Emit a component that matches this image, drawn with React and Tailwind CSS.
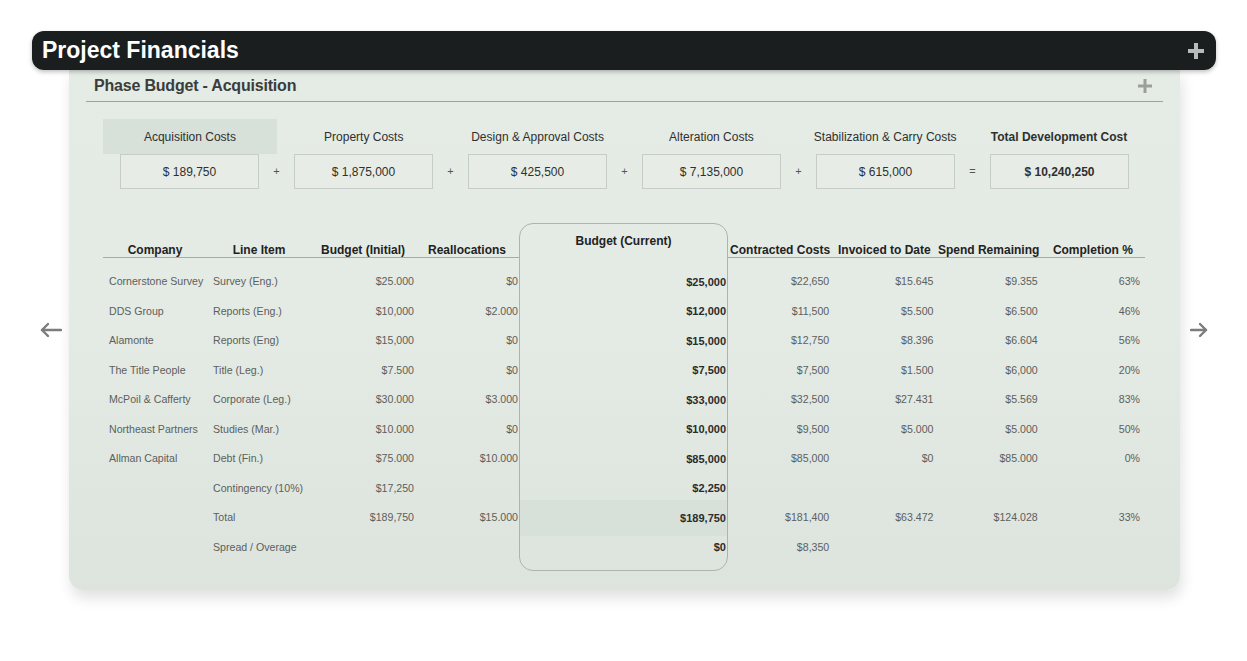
import React from "react";

const font = { fontFamily: '"Liberation Sans", Arial, Helvetica, sans-serif' };

const summary = [
  { label: "Acquisition Costs", value: "$ 189,750", active: true },
  { label: "Property Costs", value: "$ 1,875,000" },
  { label: "Design & Approval Costs", value: "$ 425,500" },
  { label: "Alteration Costs", value: "$ 7,135,000" },
  { label: "Stabilization & Carry Costs", value: "$ 615,000" },
  { label: "Total Development Cost", value: "$ 10,240,250", bold: true },
];
const ops = ["+", "+", "+", "+", "="];

const rows = [
  ["Cornerstone Survey", "Survey (Eng.)", "$25.000", "$0", "$25,000", "$22,650", "$15.645", "$9.355", "63%"],
  ["DDS Group", "Reports (Eng.)", "$10,000", "$2.000", "$12,000", "$11,500", "$5.500", "$6.500", "46%"],
  ["Alamonte", "Reports (Eng)", "$15,000", "$0", "$15,000", "$12,750", "$8.396", "$6.604", "56%"],
  ["The Title People", "Title (Leg.)", "$7.500", "$0", "$7,500", "$7,500", "$1.500", "$6,000", "20%"],
  ["McPoil & Cafferty", "Corporate (Leg.)", "$30.000", "$3.000", "$33,000", "$32,500", "$27.431", "$5.569", "83%"],
  ["Northeast Partners", "Studies (Mar.)", "$10.000", "$0", "$10,000", "$9,500", "$5.000", "$5.000", "50%"],
  ["Allman Capital", "Debt (Fin.)", "$75.000", "$10.000", "$85,000", "$85,000", "$0", "$85.000", "0%"],
  ["", "Contingency (10%)", "$17,250", "", "$2,250", "", "", "", ""],
  ["", "Total", "$189,750", "$15.000", "$189,750", "$181,400", "$63.472", "$124.028", "33%", true],
  ["", "Spread / Overage", "", "", "$0", "$8,350", "", "", ""],
];

function Plus({ size, thick, color }) {
  return (
    <svg width={size} height={size} viewBox={`0 0 ${size} ${size}`}>
      <rect x={(size - thick) / 2} y="0" width={thick} height={size} fill={color} />
      <rect x="0" y={(size - thick) / 2} width={size} height={thick} fill={color} />
    </svg>
  );
}

function Arrow({ dir }) {
  return (
    <svg width="22" height="16" viewBox="0 0 22 16" fill="none" stroke="#7a7d7b" strokeWidth="2.4" strokeLinecap="round" strokeLinejoin="round">
      {dir === "left" ? (
        <>
          <path d="M21 8H2" />
          <path d="M8 2L2 8l6 6" />
        </>
      ) : (
        <>
          <path d="M1 8h15" />
          <path d="M10 2l6 6-6 6" />
        </>
      )}
    </svg>
  );
}

const headL = ["Company", "Line Item", "Budget (Initial)", "Reallocations"];
const headR = ["Contracted Costs", "Invoiced to Date", "Spend Remaining", "Completion %"];

export default function App() {
  return (
    <div className="w-full h-[661px] bg-white overflow-hidden" style={font}>
      <div className="pt-[31px]">
        <div className="ml-[32px] w-[1184px] h-[39px] rounded-[12px] bg-[#1b1e1f] flex items-center justify-between pl-[10px] pr-[12px] relative z-10 shadow-[0_2px_4px_rgba(0,0,0,0.25)]">
          <span className="text-white font-bold text-[23px] leading-none">Project Financials</span>
          <Plus size={16} thick={4} color="#b9bbba" />
        </div>
        <div className="flex">
          <div className="w-[69px] flex items-center justify-end pr-[7px]">
            <Arrow dir="left" />
          </div>
          <div className="w-[1111px] h-[520px] rounded-b-[14px] bg-linear-to-b from-[#e5ebe5] via-[#e4eae4] to-[#dde4de] shadow-[2px_8px_14px_rgba(0,0,0,0.12)] px-[17px]">
            <div className="h-[32px] border-b border-[#9ea39f] flex items-center justify-between pl-[8px] pr-[11px] pt-[1px]">
              <span className="text-[16px] text-[#3a3d3b] tracking-[-0.2px]" style={{ fontWeight: 600 }}>Phase Budget - Acquisition</span>
              <Plus size={14} thick={3} color="#9b9f9c" />
            </div>
            <div className="px-[17px]">
              {/* summary */}
              <div className="mt-[17px]">
                <div className="flex">
                  {summary.map((s, i) => (
                    <div
                      key={i}
                      className={`w-[174px] h-[35px] flex items-center justify-center text-[12px] text-[#2e302f] ${s.active ? "bg-[#d7e0d9]" : ""} ${s.bold ? "font-bold" : ""}`}
                    >
                      {s.label}
                    </div>
                  ))}
                </div>
                <div className="flex pl-[17px]">
                  {summary.map((s, i) => (
                    <React.Fragment key={i}>
                      <div className={`w-[139px] h-[35px] border border-[#c6ccc7] bg-[#e7ece7] flex items-center justify-center text-[12px] text-[#2e302f] ${s.bold ? "font-bold" : ""}`}>
                        {s.value}
                      </div>
                      {i < ops.length && (
                        <div className="w-[35px] h-[35px] flex items-center justify-center text-[11px] text-[#555]">{ops[i]}</div>
                      )}
                    </React.Fragment>
                  ))}
                </div>
              </div>

              {/* table */}
              <div className="mt-[34px] flex items-start">
                {/* left group */}
                <div className="w-[416px]">
                  <div className="h-[35px] grid grid-cols-4 border-b border-[#a6aba7]">
                    {headL.map((h) => (
                      <div key={h} className="h-[34px] flex items-end justify-center text-[12px] leading-[14px] font-bold text-[#222] whitespace-nowrap">{h}</div>
                    ))}
                  </div>
                  <div className="pt-[9px]">
                    {rows.map((r, i) => (
                      <div key={i} className="h-[29.5px] pt-[1px] grid grid-cols-4 items-center text-[10.6px] text-[#5c5f5d]">
                        <div className="pl-[6px] whitespace-nowrap">{r[0]}</div>
                        <div className="pl-[6px] whitespace-nowrap">{r[1]}</div>
                        <div className="text-right pr-[1px]">{r[2]}</div>
                        <div className="text-right pr-[1px]">{r[3]}</div>
                      </div>
                    ))}
                  </div>
                </div>
                {/* current budget column */}
                <div className="w-[209px] h-[348px] border border-[#aeb3af] rounded-[14px] flex flex-col">
                  <div className="h-[43px] pt-[10px] text-center text-[12px] leading-[14px] font-bold text-[#222]">Budget (Current)</div>
                  <div>
                    {rows.map((r, i) => (
                      <div
                        key={i}
                        className={`${r[9] ? "h-[35.5px] -my-[3px] bg-[#d7e0d9]" : "h-[29.5px]"} flex items-center justify-end pr-[1px] text-[11px] font-bold text-[#2a2c2b]`}
                      >
                        {r[4]}
                      </div>
                    ))}
                  </div>
                </div>
                {/* right group */}
                <div className="w-[417px]">
                  <div className="h-[35px] grid grid-cols-4 border-b border-[#a6aba7]">
                    {headR.map((h) => (
                      <div key={h} className="h-[34px] flex items-end justify-center text-[12px] leading-[14px] font-bold text-[#222] whitespace-nowrap">{h}</div>
                    ))}
                  </div>
                  <div className="pt-[9px]">
                    {rows.map((r, i) => (
                      <div key={i} className="h-[29.5px] pt-[1px] grid grid-cols-4 items-center text-[10.6px] text-[#5c5f5d]">
                        <div className="text-right pr-[3px]">{r[5]}</div>
                        <div className="text-right pr-[3px]">{r[6]}</div>
                        <div className="text-right pr-[3px]">{r[7]}</div>
                        <div className="text-right pr-[5px]">{r[8]}</div>
                      </div>
                    ))}
                  </div>
                </div>
              </div>
            </div>
          </div>
          <div className="flex items-center pl-[10px]">
            <Arrow dir="right" />
          </div>
        </div>
      </div>
    </div>
  );
}
